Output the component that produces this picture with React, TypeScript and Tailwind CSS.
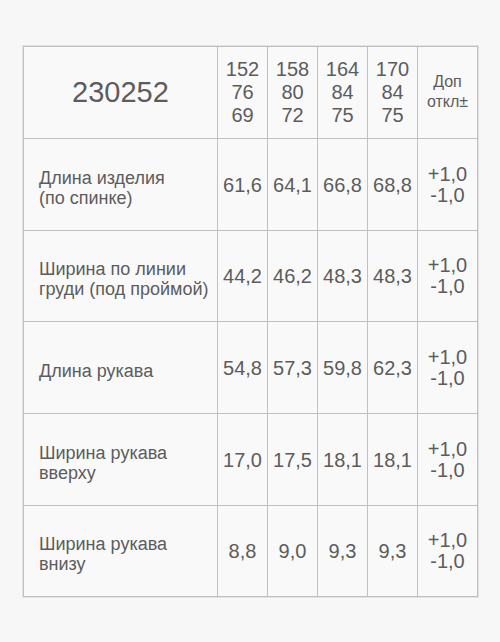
import React from "react";

const sizes = [
  ["152", "76", "69"],
  ["158", "80", "72"],
  ["164", "84", "75"],
  ["170", "84", "75"],
];

const rows: { label: string[]; vals: string[]; h: string }[] = [
  { label: ["Длина изделия", "(по спинке)"], vals: ["61,6", "64,1", "66,8", "68,8"], h: "h-[91px]" },
  { label: ["Ширина по линии", "груди (под проймой)"], vals: ["44,2", "46,2", "48,3", "48,3"], h: "h-[90px]" },
  { label: ["Длина рукава"], vals: ["54,8", "57,3", "59,8", "62,3"], h: "h-[91px]" },
  { label: ["Ширина рукава", "вверху"], vals: ["17,0", "17,5", "18,1", "18,1"], h: "h-[91px]" },
  { label: ["Ширина рукава", "внизу"], vals: ["8,8", "9,0", "9,3", "9,3"], h: "h-[90px]" },
];

export default function App() {
  return (
    <div className="w-[500px] h-[642px] bg-[#f7f7f7] pt-[45px] pl-[22px] text-[#5c5c5c] font-['Liberation_Sans',Arial,sans-serif]">
      <div className="inline-block border border-[#e2e2e2]">
        <div className="grid grid-cols-[193px_49px_49px_49px_49px_59px] gap-px p-px bg-[#c0c0c0]">
          <div className="h-[91px] bg-[#f9f9f9] flex items-center justify-center text-[29px]">
            230252
          </div>
          {sizes.map((s, i) => (
            <div
              key={i}
              className="h-[91px] bg-[#f9f9f9] flex flex-col items-center justify-center text-[20px] leading-[23px]"
            >
              {s.map((t, j) => (
                <span key={j}>{t}</span>
              ))}
            </div>
          ))}
          <div className="h-[91px] bg-[#f9f9f9] flex flex-col items-center justify-center text-[16px] leading-[20px] pb-[2px]">
            <span>Доп</span>
            <span>откл±</span>
          </div>
          {rows.map((r, i) => (
            <React.Fragment key={i}>
              <div
                className={`${r.h} bg-[#f9f9f9] flex flex-col justify-center pl-[15px] pt-[6px] text-[18px] leading-[20px]`}
              >
                {r.label.map((t, j) => (
                  <span key={j}>{t}</span>
                ))}
              </div>
              {r.vals.map((v, j) => (
                <div
                  key={j}
                  className={`${r.h} bg-[#f9f9f9] flex items-center justify-center text-[20px]`}
                >
                  {v}
                </div>
              ))}
              <div
                className={`${r.h} bg-[#f9f9f9] flex flex-col items-center justify-center text-[20px] leading-[21px]`}
              >
                <span>+1,0</span>
                <span>-1,0</span>
              </div>
            </React.Fragment>
          ))}
        </div>
      </div>
    </div>
  );
}
